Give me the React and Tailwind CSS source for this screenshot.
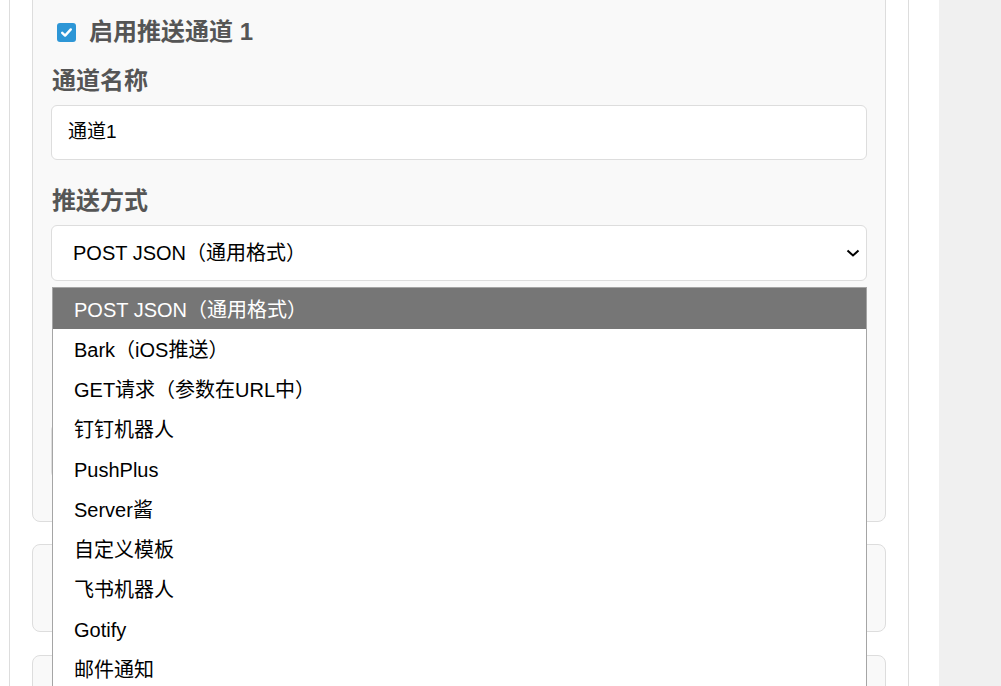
import { useState } from 'react';

const FONT = "font-['Liberation_Sans','Noto_Sans_CJK_SC',sans-serif]";

const options = [
  'POST JSON（通用格式）',
  'Bark（iOS推送）',
  'GET请求（参数在URL中）',
  '钉钉机器人',
  'PushPlus',
  'Server酱',
  '自定义模板',
  '飞书机器人',
  'Gotify',
  '邮件通知',
];

const Checkbox = () => (
  <span className="w-[19px] h-[19px] rounded-[3px] bg-[#2d96d6] flex items-center justify-center shrink-0">
    <svg width="13" height="13" viewBox="0 0 13 13" fill="none">
      <path d="M2.2 6.8 L5.1 9.6 L10.8 3.4" stroke="white" strokeWidth="2.4" strokeLinecap="round" strokeLinejoin="round" />
    </svg>
  </span>
);

export default function App() {
  const [selected] = useState(0);

  return (
    <div className={`${FONT} h-[686px] overflow-hidden flex bg-[#f0f0f0]`}>
      <div className="w-[939px] bg-white shrink-0">
        <div className="relative flow-root ml-[9px] w-[900px] h-[686px] border-x border-[#ddd] px-[22px]">
          {/* Channel 1 */}
          <div className="-mt-[10px] rounded-lg border border-[#ddd] bg-[#f9f9f9] px-[18px] pt-[19px] pb-[43px]">
            <div className="h-[44px] flex items-center gap-[13px] pl-[6px]">
              <Checkbox />
              <span className="text-[24px] font-bold text-[#555]">启用推送通道 1</span>
            </div>

            <div className="mt-[12px] h-[30px] flex items-center pl-[1px] text-[24px] font-bold text-[#555]">通道名称</div>
            <div className="mt-[9px] h-[55px] rounded-md border border-[#ddd] bg-white flex items-center px-[16px] text-[19px] text-black">
              通道1
            </div>

            <div className="mt-[26px] h-[30px] flex items-center pl-[1px] text-[24px] font-bold text-[#555]">推送方式</div>
            <div className="mt-[9px] h-[56px] rounded-md border border-[#ddd] bg-white flex items-center justify-between pl-[21px] pr-[6px] text-[20px] text-black">
              <span>{options[selected]}</span>
              <svg width="14" height="10" viewBox="0 0 14 10" fill="none">
                <path d="M1.5 2.5 L7 7.5 L12.5 2.5" stroke="black" strokeWidth="2" />
              </svg>
            </div>

            {/* field hidden behind the open list */}
            <div className="mt-[143px] h-[54px] rounded-md border border-[#ddd] bg-white" />
          </div>

          <div className="mt-[22px] h-[88px] rounded-lg border border-[#ddd] bg-[#f9f9f9]" />
          <div className="mt-[23px] h-[88px] rounded-lg border border-[#ddd] bg-[#f9f9f9]" />

          {/* Open select popup */}
          <div className="absolute left-[42px] top-[287px] w-[815px] border border-[#a5a5a5] bg-white text-[20px] text-black">
            {options.map((o, i) => (
              <div
                key={o}
                className={`${i === selected ? 'h-[41px] bg-[#767676] text-white' : 'h-[40px]'} flex items-center pl-[21px] pt-[2px]`}
              >
                {o}
              </div>
            ))}
          </div>
        </div>
      </div>
      <div className="flex-1" />
    </div>
  );
}
